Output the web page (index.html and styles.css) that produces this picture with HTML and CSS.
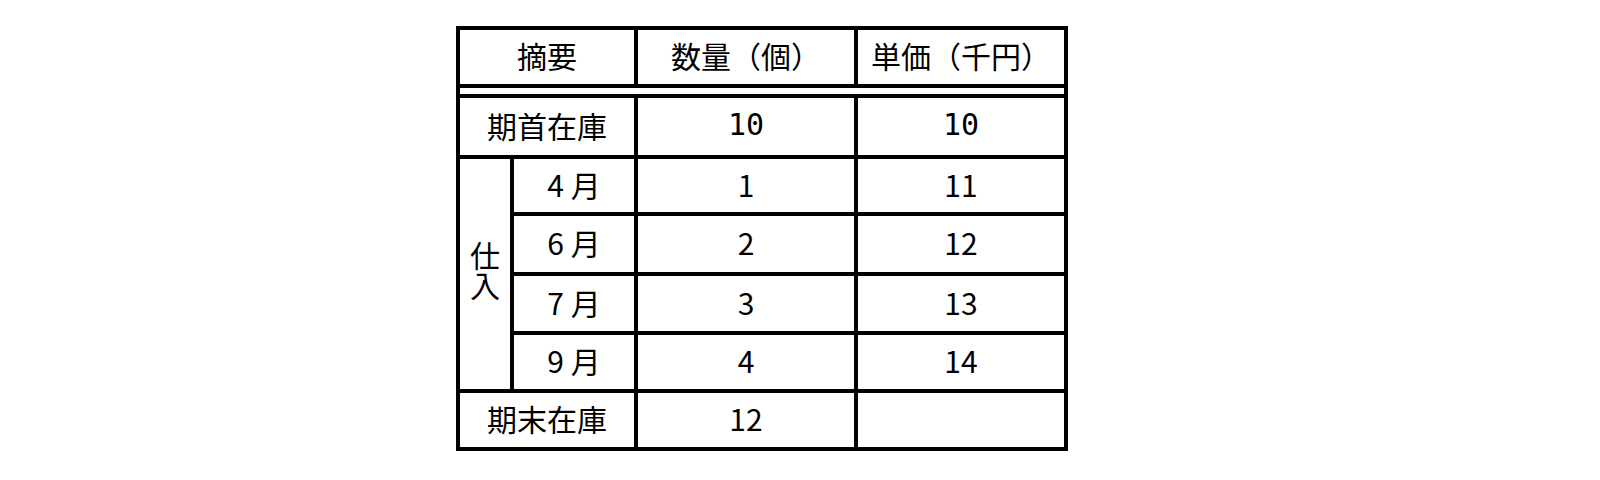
FILE: index.html
```html
<!DOCTYPE html>
<html lang="ja">
<head>
<meta charset="utf-8">
<title>在庫表</title>
<link rel="stylesheet" href="styles.css">
</head>
<body>
<table class="stock">
  <colgroup>
    <col class="c-side">
    <col class="c-month">
    <col class="c-qty">
    <col class="c-price">
  </colgroup>
  <thead>
    <tr class="row-head">
      <th colspan="2">摘要</th>
      <th>数量（個）</th>
      <th>単価（千円）</th>
    </tr>
    <tr class="row-gap"><td colspan="4"></td></tr>
  </thead>
  <tbody>
    <tr class="row-open">
      <td colspan="2">期首在庫</td>
      <td class="mono">10</td>
      <td class="mono">10</td>
    </tr>
    <tr class="row-m1">
      <td rowspan="4" class="side"><span class="vert">仕入</span></td>
      <td>4 月</td>
      <td>1</td>
      <td>11</td>
    </tr>
    <tr class="row-m2">
      <td>6 月</td>
      <td>2</td>
      <td>12</td>
    </tr>
    <tr class="row-m3">
      <td>7 月</td>
      <td>3</td>
      <td>13</td>
    </tr>
    <tr class="row-m4">
      <td>9 月</td>
      <td>4</td>
      <td>14</td>
    </tr>
    <tr class="row-close">
      <td colspan="2">期末在庫</td>
      <td>12</td>
      <td></td>
    </tr>
  </tbody>
</table>
</body>
</html>
```

FILE: styles.css
```css
html, body {
  margin: 0;
  padding: 0;
  background: #ffffff;
}

body {
  font-family: "Noto Sans CJK JP", "Noto Sans", sans-serif;
  color: #000000;
}

.stock {
  margin: 26px 0 0 456px;
  border-collapse: separate;
  border-spacing: 0;
  table-layout: fixed;
  width: 612px;
  border-left: 4px solid #000;
  border-top: 4px solid #000;
}

.c-side { width: 54px; }
.c-month { width: 124px; }
.c-qty { width: 220px; }
.c-price { width: 210px; }

.stock th,
.stock td {
  box-sizing: border-box;
  padding: 0 0 4px 0;
  border-right: 4px solid #000;
  border-bottom: 4px solid #000;
  font-size: 30px;
  font-weight: 400;
  line-height: 30px;
  text-align: center;
  vertical-align: middle;
  white-space: nowrap;
}

.row-head { height: 58px; }
.row-gap { height: 10px; }
.row-gap td {
  padding: 0;
  font-size: 0;
  line-height: 0;
}
.row-open { height: 61px; }
.row-m1 { height: 57px; }
.row-m2 { height: 60px; }
.row-m3 { height: 59px; }
.row-m4 { height: 58px; }
.row-close { height: 58px; }

.mono {
  font-family: "DejaVu Sans Mono", "Liberation Mono", monospace;
  font-size: 28px;
  font-variant-numeric: slashed-zero;
}

.side {
  padding: 0;
}

.vert {
  display: inline-block;
  writing-mode: vertical-rl;
  line-height: 30px;
}
```
